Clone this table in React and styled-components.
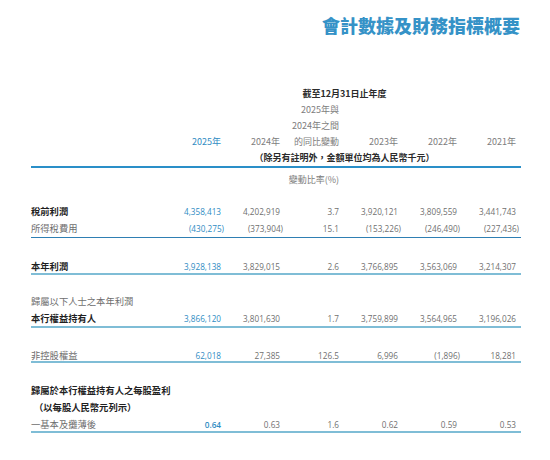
import styled, { createGlobalStyle } from "styled-components"

const GlobalStyle = createGlobalStyle`
    html, body {
        margin: 0;
        padding: 0;
        background: #ffffff;
    }
    body {
        font-family: "Noto Sans CJK TC", "Noto Sans", sans-serif;
    }
`

const Page = styled.div`
    width: 550px;
    height: 460px;
    box-sizing: border-box;
    padding: 13px 29px 0 31px;
    overflow: hidden;
`

const Title = styled.h1`
    margin: 0;
    text-align: right;
    font-size: 18px;
    line-height: 24px;
    font-weight: 900;
    color: #3592c7;
    padding-right: 1px;
`

const Header = styled.div`
    margin-top: 49px;
`

const Row = styled.div`
    display: grid;
    grid-template-columns: 1fr repeat(6, 59px);
    padding-right: 5px;
    align-items: center;
    line-height: ${props => props.$lh || 17}px;
`

const Caption = styled.div`
    grid-column: 2 / 8;
    text-align: center;
    padding-left: 11px;
    font-size: 9px;
    font-weight: 700;
    color: #2b2b2b;
`

const HeadCell = styled.div`
    grid-column: ${props => props.$col};
    text-align: right;
    font-size: 9px;
    white-space: nowrap;
    color: ${props => props.$blue ? "#2f8cc3" : "#7d7d7d"};
`

const Rule = styled.div`
    height: ${props => props.$h || 2}px;
    background: ${props => props.$tone === "dark" ? "#2f7fb3" : props.$tone === "mid" ? "#2a8fc8" : "#7fbdd6"};
    margin-top: ${props => props.$pull || 0}px;
`

const Group = styled.div`
    margin-top: ${props => props.$gap}px;
`

const Label = styled.div`
    font-size: 9.3px;
    white-space: nowrap;
    font-weight: ${props => props.$bold ? 700 : 400};
    color: ${props => props.$bold ? "#1f1f1f" : "#6e6e6e"};
    padding-left: ${props => props.$indent || 0}px;
`

const Num = styled.div`
    text-align: right;
    white-space: nowrap;
    font-family: "Open Sans", "Noto Sans", sans-serif;
    font-size: 8.2px;
    font-weight: ${props => props.$strong ? 600 : 400};
    color: ${props => props.$blue ? "#2f8cc3" : "#6f6f6f"};
    margin-right: ${props => props.$neg ? -3 : 0}px;
`

const DataRow = ({ label, bold, values, indent, strong }) => (
    <Row>
        <Label $bold={bold} $indent={indent}>{label}</Label>
        {values && values.map((v, i) => (
            <Num key={i} $blue={i === 0} $strong={strong && i === 0} $neg={v.startsWith("(")}>{v}</Num>
        ))}
    </Row>
)

export default function App() {
    return (
        <Page>
            <GlobalStyle />
            <Title>會計數據及財務指標概要</Title>

            <Header>
                <Row $lh={16}>
                    <Caption>截至12月31日止年度</Caption>
                </Row>
                <Row $lh={16}>
                    <HeadCell $col={4}>2025年與</HeadCell>
                </Row>
                <Row $lh={16}>
                    <HeadCell $col={4}>2024年之間</HeadCell>
                </Row>
                <Row $lh={16}>
                    <HeadCell $col={2} $blue>2025年</HeadCell>
                    <HeadCell $col={3}>2024年</HeadCell>
                    <HeadCell $col={4}>的同比變動</HeadCell>
                    <HeadCell $col={5}>2023年</HeadCell>
                    <HeadCell $col={6}>2022年</HeadCell>
                    <HeadCell $col={7}>2021年</HeadCell>
                </Row>
                <Row $lh={16}>
                    <Caption>（除另有註明外，金額單位均為人民幣千元）</Caption>
                </Row>
            </Header>
            <Rule $tone="mid" $h={2} />
            <Group $gap={2.5}>
                <Row>
                    <HeadCell $col={4}>變動比率(%)</HeadCell>
                </Row>
            </Group>

            <Group $gap={15.7}>
                <DataRow label="稅前利潤" bold values={["4,358,413", "4,202,919", "3.7", "3,920,121", "3,809,559", "3,441,743"]} />
                <DataRow label="所得稅費用" values={["(430,275)", "(373,904)", "15.1", "(153,226)", "(246,490)", "(227,436)"]} />
            </Group>
            <Rule $tone="dark" $h={1} />

            <Group $gap={19.5}>
                <DataRow label="本年利潤" bold values={["3,928,138", "3,829,015", "2.6", "3,766,895", "3,563,069", "3,214,307"]} />
            </Group>
            <Rule $pull={-2} />

            <Group $gap={18}>
                <DataRow label="歸屬以下人士之本年利潤" />
                <DataRow label="本行權益持有人" bold values={["3,866,120", "3,801,630", "1.7", "3,759,899", "3,564,965", "3,196,026"]} />
            </Group>
            <Rule $pull={-1} />

            <Group $gap={19.5}>
                <DataRow label="非控股權益" values={["62,018", "27,385", "126.5", "6,996", "(1,896)", "18,281"]} />
            </Group>
            <Rule $pull={-3} />

            <Group $gap={19}>
                <DataRow label="歸屬於本行權益持有人之每股盈利" bold />
                <DataRow label="（以每股人民幣元列示）" bold indent={3} />
                <DataRow label="一基本及攤薄後" strong values={["0.64", "0.63", "1.6", "0.62", "0.59", "0.53"]} />
            </Group>
            <Rule $pull={-2} />
        </Page>
    )
}
